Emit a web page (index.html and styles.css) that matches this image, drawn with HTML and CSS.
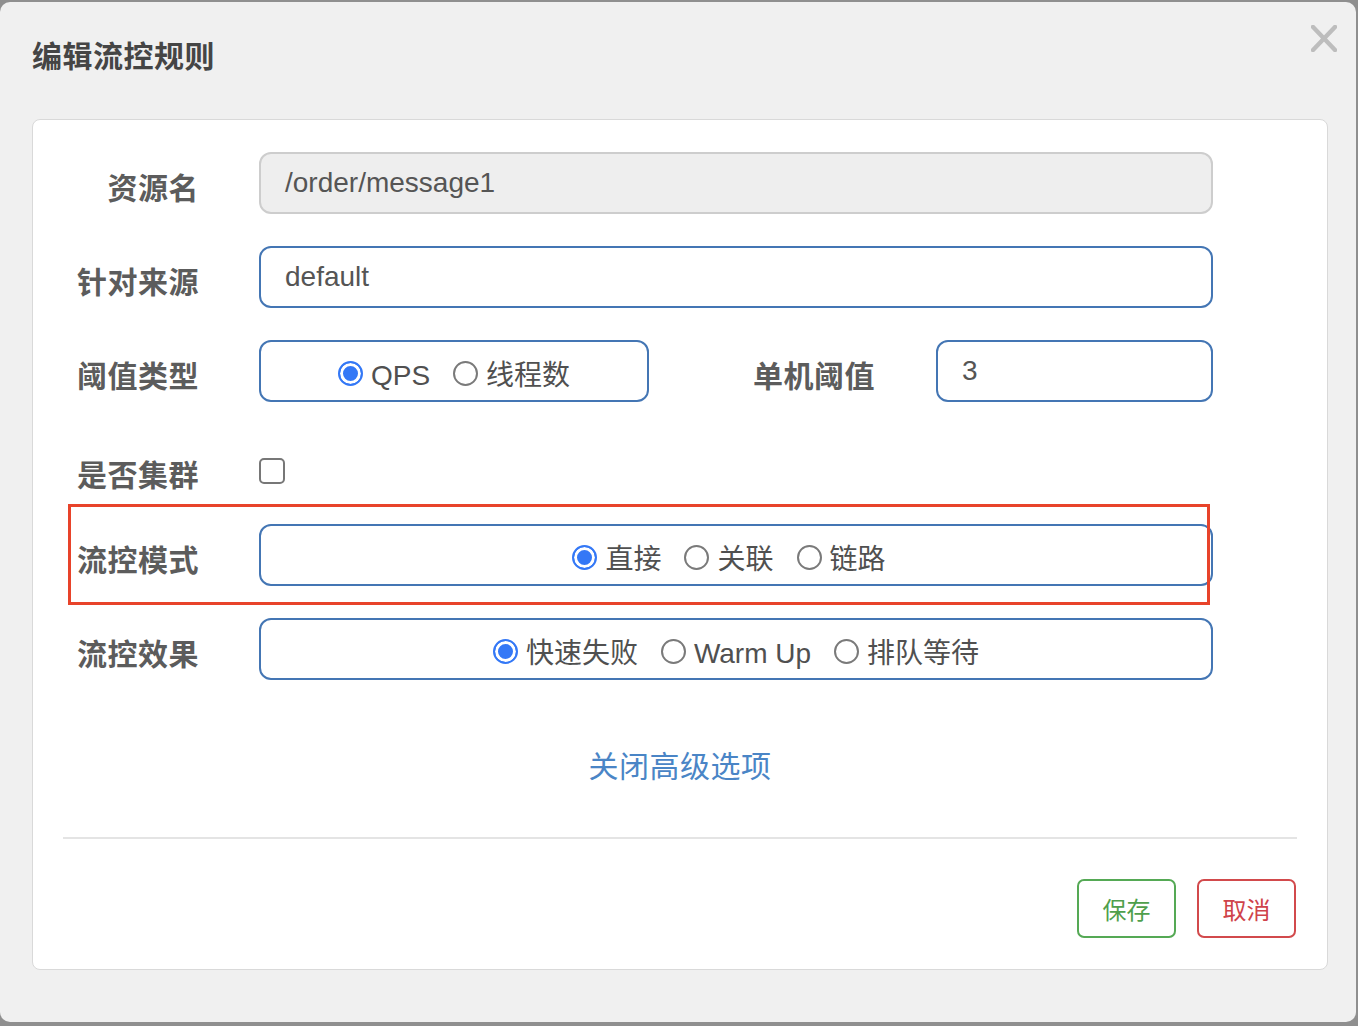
FILE: index.html
```html
<!DOCTYPE html>
<html lang="zh-CN">
<head>
<meta charset="utf-8">
<title>编辑流控规则</title>
<link rel="stylesheet" href="styles.css">
</head>
<body>
<div class="dialog">
  <div class="header">
    <h1 class="title">编辑流控规则</h1>
    <span class="close" aria-label="close">
      <svg width="26" height="27" viewBox="0 0 26 27"><path d="M2 2 L24 25 M24 2 L2 25" stroke="#bdbdbd" stroke-width="4.4" stroke-linecap="square"/></svg>
    </span>
  </div>
  <div class="panel">
    <div class="form">
      <div class="row">
        <label class="label">资源名</label>
        <div class="input readonly">/order/message1</div>
      </div>
      <div class="row">
        <label class="label">针对来源</label>
        <div class="input">default</div>
      </div>
      <div class="row">
        <label class="label">阈值类型</label>
        <div class="field-split">
          <div class="choice small">
            <span class="opt"><span class="radio on"></span>QPS</span>
            <span class="opt"><span class="radio"></span>线程数</span>
          </div>
          <label class="label inner">单机阈值</label>
          <div class="input short">3</div>
        </div>
      </div>
      <div class="row cluster">
        <label class="label">是否集群</label>
        <div class="field-cb"><span class="checkbox"></span></div>
      </div>
      <div class="row marked">
        <label class="label">流控模式</label>
        <div class="choice mode">
          <span class="opt"><span class="radio on"></span>直接</span>
          <span class="opt"><span class="radio"></span>关联</span>
          <span class="opt"><span class="radio"></span>链路</span>
        </div>
        <span class="highlight"></span>
      </div>
      <div class="row">
        <label class="label">流控效果</label>
        <div class="choice">
          <span class="opt"><span class="radio on"></span>快速失败</span>
          <span class="opt"><span class="radio"></span>Warm Up</span>
          <span class="opt"><span class="radio"></span>排队等待</span>
        </div>
      </div>
    </div>
    <div class="advanced"><a class="link">关闭高级选项</a></div>
    <div class="divider"></div>
    <div class="footer">
      <button class="btn save">保存</button>
      <button class="btn cancel">取消</button>
    </div>
  </div>
</div>
</body>
</html>
```
FILE: styles.css
```css
* { box-sizing: border-box; }
html, body { margin: 0; padding: 0; }
body {
  background: #8f8f8f;
  width: 1358px;
  height: 1026px;
  overflow: hidden;
  font-family: "Liberation Sans", "Noto Sans CJK SC", sans-serif;
  color: #555;
}
.dialog {
  position: relative;
  margin-top: 2px;
  width: 1356px;
  height: 1020px;
  background: #f0f0f0;
  border-radius: 10px;
  padding-bottom: 52px;
}
.header {
  height: 117px;
  padding: 32px 0 0 32px;
}
.title {
  margin: 0;
  font-family: "Noto Sans CJK SC", sans-serif;
  font-size: 30px;
  line-height: 40px;
  font-weight: 700;
  color: #454545;
  letter-spacing: 0.5px;
}
.close {
  position: absolute;
  top: 23px;
  right: 19px;
  width: 26px;
  height: 27px;
  display: block;
}
.close svg { display: block; }
.panel {
  margin: 0 28px 0 32px;
  background: #fff;
  border: 1px solid #d9d9d9;
  border-radius: 8px;
  height: 851px;
}
.form {
  padding-top: 32px;
  display: flex;
  flex-direction: column;
  gap: 32px;
}
.row {
  display: grid;
  grid-template-columns: 166px 954px;
  column-gap: 60px;
  align-items: center;
  height: 62px;
}
.row.cluster {
  height: 58px;
  padding-top: 14px;
}
.row.marked { position: relative; }
.label {
  font-family: "Noto Sans CJK SC", sans-serif;
  font-size: 30px;
  font-weight: 700;
  color: #5c5c5c;
  text-align: right;
  line-height: 40px;
  padding-top: 5px;
  letter-spacing: 0.5px;
}
.input {
  height: 62px;
  border: 2px solid #4476b4;
  border-radius: 12px;
  padding: 0 24px;
  display: flex;
  align-items: center;
  font-size: 28px;
  color: #555;
}
.input.readonly {
  background: #eeeeee;
  border-color: #cdcdcd;
}
.field-split {
  display: flex;
  align-items: center;
  height: 62px;
}
.choice {
  height: 62px;
  border: 2px solid #4476b4;
  border-radius: 12px;
  display: flex;
  justify-content: center;
  align-items: center;
  gap: 23px;
  padding-top: 9px;
  font-family: "Liberation Sans", "Noto Sans CJK SC", sans-serif;
  font-size: 28px;
  color: #505050;
}
.choice.mode { padding-right: 14px; }
.choice.small { width: 390px; flex: none; }
.label.inner {
  flex: 1;
  margin-right: 61px;
}
.input.short { width: 277px; flex: none; }
.opt {
  display: flex;
  align-items: center;
  gap: 8px;
  line-height: 36px;
}
.radio {
  width: 25px;
  height: 25px;
  border: 2px solid #7a7a7a;
  border-radius: 50%;
  flex: none;
  margin-top: -5px;
}
.radio.on {
  border-color: #3478f6;
  background: #3478f6;
  box-shadow: inset 0 0 0 3px #fff;
}
.field-cb {
  display: flex;
  align-items: center;
}
.checkbox {
  width: 26px;
  height: 26px;
  border: 2px solid #777;
  border-radius: 5px;
  display: block;
}
.highlight {
  position: absolute;
  left: 35px;
  top: -20px;
  width: 1142px;
  height: 101px;
  border: 3px solid #e8432a;
  pointer-events: none;
}
.advanced {
  margin-top: 64px;
  text-align: center;
  height: 40px;
  line-height: 40px;
}
.link {
  font-family: "Noto Sans CJK SC", sans-serif;
  font-size: 30px;
  letter-spacing: 0.5px;
  color: #4a85c6;
}
.divider {
  margin: 53px 30px 0 30px;
  height: 2px;
  background: #e4e4e4;
}
.footer {
  display: flex;
  justify-content: flex-end;
  gap: 21px;
  margin-top: 40px;
  padding-right: 31px;
}
.btn {
  width: 99px;
  height: 59px;
  background: #fff;
  border-radius: 7px;
  font-family: "Noto Sans CJK SC", sans-serif;
  font-size: 24px;
  padding: 0;
  cursor: pointer;
}
.btn.save {
  border: 2px solid #55a955;
  color: #4f9f4c;
}
.btn.cancel {
  border: 2px solid #d24a4c;
  color: #cf434a;
}
```
